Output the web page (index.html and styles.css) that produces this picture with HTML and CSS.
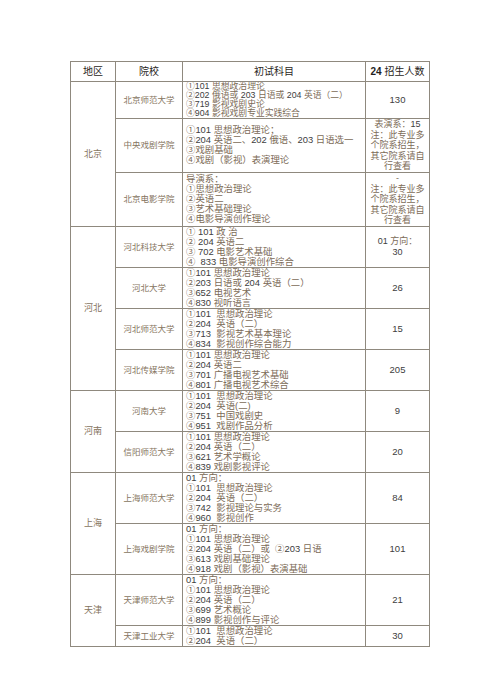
FILE: index.html
```html
<!DOCTYPE html>
<html lang="zh">
<head>
<meta charset="utf-8">
<title>招生表</title>
<link rel="stylesheet" href="styles.css">
</head>
<body>
<table class="grid">
  <colgroup>
    <col class="c-area"><col class="c-school"><col class="c-subj"><col class="c-num">
  </colgroup>
  <thead>
    <tr>
      <th>地区</th><th>院校</th><th>初试科目</th><th><b class="hn">24</b> 招生人数</th>
    </tr>
  </thead>
  <tbody>
    <tr class="tight">
      <td rowspan="3" class="area">北京</td>
      <td class="school">北京师范大学</td>
      <td class="subj">①<span class="n">101</span> 思想政治理论<br>②<span class="n">202</span> 俄语或 <span class="n">203</span> 日语或 <span class="n">204</span> 英语（二）<br>③<span class="n">719</span> 影视戏剧史论<br>④<span class="n">904</span> 影视戏剧专业实践综合</td>
      <td class="n">130</td>
    </tr>
    <tr>
      <td class="school">中央戏剧学院</td>
      <td class="subj">①<span class="n">101</span> 思想政治理论；<br>②<span class="n">204</span> 英语二、<span class="n">202</span> 俄语、<span class="n">203</span> 日语选一<br>③戏剧基础<br>④戏剧（影视）表演理论</td>
      <td class="note">表演系：<span class="n">15</span><br>注：此专业多<br>个院系招生，<br>其它院系请自<br>行查看</td>
    </tr>
    <tr>
      <td class="school">北京电影学院</td>
      <td class="subj">导演系：<br>①思想政治理论<br>②英语二<br>③艺术基础理论<br>④电影导演创作理论</td>
      <td class="note">-<br>注：此专业多<br>个院系招生，<br>其它院系请自<br>行查看</td>
    </tr>
    <tr>
      <td rowspan="4" class="area">河北</td>
      <td class="school">河北科技大学</td>
      <td class="subj">① <span class="n">101</span> 政 治<br>② <span class="n">204</span> 英语二<br>③ <span class="n">702</span> 电影艺术基础<br>④ &nbsp;<span class="n">833</span> 电影导演创作综合</td>
      <td class="note"><span class="n">01</span> 方向：<br><span class="n">30</span></td>
    </tr>
    <tr>
      <td class="school">河北大学</td>
      <td class="subj">①<span class="n">101</span> 思想政治理论<br>②<span class="n">203</span> 日语或 <span class="n">204</span> 英语（二）<br>③<span class="n">652</span> 电视艺术<br>④<span class="n">830</span> 视听语言</td>
      <td class="n">26</td>
    </tr>
    <tr>
      <td class="school">河北师范大学</td>
      <td class="subj">①<span class="n">101</span> &nbsp;思想政治理论<br>②<span class="n">204</span> &nbsp;英语（二）<br>③<span class="n">713</span> &nbsp;影视艺术基本理论<br>④<span class="n">834</span> &nbsp;影视创作综合能力</td>
      <td class="n">15</td>
    </tr>
    <tr>
      <td class="school">河北传媒学院</td>
      <td class="subj">①<span class="n">101</span> 思想政治理论<br>②<span class="n">204</span> 英语二<br>③<span class="n">701</span> 广播电视艺术基础<br>④<span class="n">801</span> 广播电视艺术综合</td>
      <td class="n">205</td>
    </tr>
    <tr>
      <td rowspan="2" class="area">河南</td>
      <td class="school">河南大学</td>
      <td class="subj">①<span class="n">101</span> &nbsp;思想政治理论<br>②<span class="n">204</span> &nbsp;英语(二)<br>③<span class="n">751</span> &nbsp;中国戏剧史<br>④<span class="n">951</span> &nbsp;戏剧作品分析</td>
      <td class="n">9</td>
    </tr>
    <tr>
      <td class="school">信阳师范大学</td>
      <td class="subj">①<span class="n">101</span> 思想政治理论<br>②<span class="n">204</span> 英语（二）<br>③<span class="n">621</span> 艺术学概论<br>④<span class="n">839</span> 戏剧影视评论</td>
      <td class="n">20</td>
    </tr>
    <tr>
      <td rowspan="2" class="area">上海</td>
      <td class="school">上海师范大学</td>
      <td class="subj"><span class="n">01</span> 方向：<br>①<span class="n">101</span> &nbsp;思想政治理论<br>②<span class="n">204</span> &nbsp;英语（二）<br>③<span class="n">742</span> &nbsp;影视理论与实务<br>④<span class="n">960</span> &nbsp;影视创作</td>
      <td class="n">84</td>
    </tr>
    <tr>
      <td class="school">上海戏剧学院</td>
      <td class="subj"><span class="n">01</span> 方向：<br>①<span class="n">101</span> 思想政治理论<br>②<span class="n">204</span> 英语（二）或 &nbsp;②<span class="n">203</span> 日语<br>③<span class="n">613</span> 戏剧基础理论<br>④<span class="n">918</span> 戏剧（影视）表演基础</td>
      <td class="n">101</td>
    </tr>
    <tr>
      <td rowspan="2" class="area">天津</td>
      <td class="school">天津师范大学</td>
      <td class="subj"><span class="n">01</span> 方向：<br>①<span class="n">101</span> 思想政治理论<br>②<span class="n">204</span> 英语（二）<br>③<span class="n">699</span> 艺术概论<br>④<span class="n">899</span> 影视创作与评论</td>
      <td class="n">21</td>
    </tr>
    <tr>
      <td class="school">天津工业大学</td>
      <td class="subj">①<span class="n">101</span> &nbsp;思想政治理论<br>②<span class="n">204</span> &nbsp;英语（二）</td>
      <td class="n">30</td>
    </tr>
  </tbody>
</table>
</body>
</html>
```

FILE: styles.css
```css
html, body {
  margin: 0;
  padding: 0;
  background: #ffffff;
}

body {
  font-family: "Liberation Sans", "Noto Sans CJK SC", sans-serif;
}

.grid {
  border-collapse: collapse;
  table-layout: fixed;
  width: 359px;
  margin: 61px auto 0;
}

.c-area { width: 45px; }
.c-school { width: 67px; }
.c-subj { width: 183px; }
.c-num { width: 64px; }

.grid th,
.grid td {
  border: 1px solid #8f897e;
  padding: 0;
  text-align: center;
  vertical-align: middle;
  font-size: 9.4px;
  line-height: 10px;
  color: #7c6b57;
  font-weight: normal;
  overflow: hidden;
  white-space: nowrap;
}

.grid th {
  height: 19px;
  font-size: 10px;
  color: #2a2622;
}

.grid .hn {
  font-weight: bold;
  color: #1f1f1f;
}

.grid .area {
  font-size: 9px;
  color: #857460;
}

.grid .school {
  font-size: 8.5px;
  color: #857460;
}

.grid .subj {
  text-align: left;
  padding-left: 3px;
}

.grid .note {
  font-size: 9px;
  line-height: 10.6px;
}

.grid .n {
  color: #404040;
}

.grid td.n {
  font-size: 9.5px;
}

.grid .tight .subj {
  font-size: 8.8px;
  line-height: 9px;
}
```
